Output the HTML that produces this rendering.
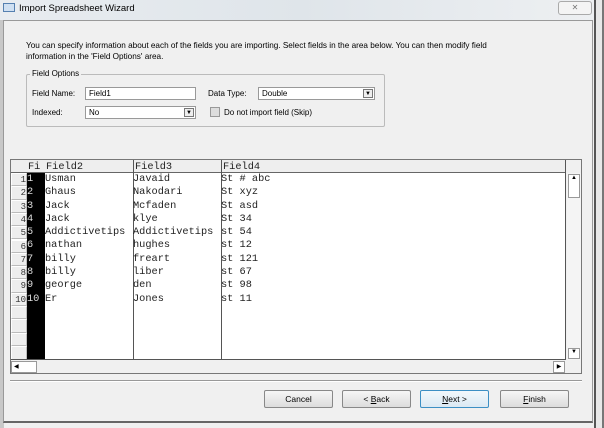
<!DOCTYPE html>
<html><head><style>
*{box-sizing:border-box;margin:0;padding:0}
body{width:604px;height:428px;background:#f0f0f0;font-family:"Liberation Sans",sans-serif;font-size:8px;color:#000;position:relative;overflow:hidden}
.a{position:absolute}
.mono{font-family:"Liberation Mono",monospace;font-size:10.3px;color:#222}
.inp{background:#fff;border:1px solid #999;font-size:8px;padding:1px 3px;height:13px}
.dd{position:absolute;right:1px;top:1px;width:10px;height:9px;border:1px solid #777;background:#eee;font-size:6px;text-align:center;line-height:8px}
.btn{position:absolute;top:390px;height:18px;width:69px;border:1px solid #888;border-radius:2px;background:linear-gradient(#f6f6f6,#dcdcdc);text-align:center;line-height:16px;font-size:8.5px}
.rn{position:absolute;left:11px;width:16px;height:13.3px;border:1px solid #bbb;border-top-color:#fff;border-left-color:#fff;background:#eee;font-family:"Liberation Mono",monospace;font-size:9px;text-align:right;line-height:12px;color:#333}
</style></head><body>
<div class="a" style="left:0;top:0;width:604px;height:20px;background:linear-gradient(90deg,#e8ecf0,#dfe5ea 50%,#eef0f2)"></div>
<div class="a" style="left:3px;top:3px;width:12px;height:9px;border:1px solid #5580b0;background:#cfe0f2"></div>
<div class="a" style="left:19px;top:3px;font-size:9.5px">Import Spreadsheet Wizard</div>
<div class="a" style="left:558px;top:1px;width:34px;height:14px;border:1px solid #aaa;border-radius:3px;background:#f4f4f4;text-align:center;font-size:8px;color:#777;line-height:12px">✕</div>
<div class="a" style="left:0;top:20px;width:4px;height:408px;background:#c8c8c8"></div>
<div class="a" style="left:594px;top:0;width:10px;height:428px;background:#e8e8e8;border-left:2px solid #555;border-right:2px solid #777"></div>
<div class="a" style="left:3px;top:20px;width:590px;height:403px;border:1px solid #999;border-bottom:2px solid #666"></div>
<div class="a" style="left:26px;top:40px;line-height:11px;width:500px;font-size:8.2px">You can specify information about each of the fields you are importing. Select fields in the area below. You can then modify field<br>information in the 'Field Options' area.</div>
<div class="a" style="left:26px;top:74px;width:359px;height:53px;border:1px solid #bbb;border-radius:2px"></div>
<div class="a" style="left:30px;top:69px;background:#f0f0f0;padding:0 2px">Field Options</div>
<div class="a" style="left:32px;top:89px">Field Name:</div>
<div class="a inp" style="left:85px;top:87px;width:111px">Field1</div>
<div class="a" style="left:208px;top:89px">Data Type:</div>
<div class="a inp" style="left:258px;top:87px;width:117px">Double<div class="dd">▼</div></div>
<div class="a" style="left:32px;top:108px">Indexed:</div>
<div class="a inp" style="left:85px;top:106px;width:111px">No<div class="dd">▼</div></div>
<div class="a" style="left:210px;top:107px;width:10px;height:10px;border:1px solid #999;background:#ddd"></div>
<div class="a" style="left:224px;top:108px">Do not import field (Skip)</div>
<!-- grid -->
<div class="a" style="left:10px;top:159px;width:572px;height:215px;border:1px solid #777;background:#f0f0f0"></div>
<div class="a" style="left:11px;top:160px;width:555px;height:200px;background:#fff"></div>
<div class="a" style="left:11px;top:160px;width:555px;height:13px;background:#eee;border-bottom:1px solid #666"></div>
<div class="rn" style="top:173px">1</div><div class="rn" style="top:186.3px">2</div><div class="rn" style="top:199.6px">3</div><div class="rn" style="top:212.9px">4</div><div class="rn" style="top:226.2px">5</div><div class="rn" style="top:239.5px">6</div><div class="rn" style="top:252.8px">7</div><div class="rn" style="top:266.1px">8</div><div class="rn" style="top:279.4px">9</div><div class="rn" style="top:292.7px">10</div><div class="rn" style="top:306px"></div><div class="rn" style="top:319.3px"></div><div class="rn" style="top:332.6px"></div><div class="rn" style="top:345.9px;height:14px"></div>
<div class="a" style="left:27px;top:173px;width:18px;height:187px;background:#000"></div>
<div class="a" style="left:133px;top:160px;width:1px;height:200px;background:#555"></div>
<div class="a" style="left:221px;top:160px;width:1px;height:200px;background:#555"></div>
<div class="a" style="left:565px;top:160px;width:1px;height:200px;background:#555"></div>
<div class="a" style="left:11px;top:359px;width:555px;height:1px;background:#555"></div>
<div class="a mono" style="left:28px;top:161px">Fi</div>
<div class="a mono" style="left:46px;top:161px">Field2</div>
<div class="a mono" style="left:135px;top:161px">Field3</div>
<div class="a mono" style="left:223px;top:161px">Field4</div>
<div class="a mono" style="left:27px;top:173px;line-height:13.3px;color:#ddd">1<br>2<br>3<br>4<br>5<br>6<br>7<br>8<br>9<br>10</div>
<div class="a mono" style="left:45px;top:173px;line-height:13.3px">Usman<br>Ghaus<br>Jack<br>Jack<br>Addictivetips<br>nathan<br>billy<br>billy<br>george<br>Er</div>
<div class="a mono" style="left:133px;top:173px;line-height:13.3px">Javaid<br>Nakodari<br>Mcfaden<br>klye<br>Addictivetips<br>hughes<br>freart<br>liber<br>den<br>Jones</div>
<div class="a mono" style="left:221px;top:173px;line-height:13.3px">St # abc<br>St xyz<br>St asd<br>St 34<br>st 54<br>st 12<br>st 121<br>st 67<br>st 98<br>st 11</div>
<div class="a" style="left:567px;top:173px;width:14px;height:187px;background:#f4f4f4"></div>
<div class="a" style="left:568px;top:174px;width:12px;height:24px;border:1px solid #999;background:#fff;font-size:6px;text-align:center">▲</div>
<div class="a" style="left:568px;top:348px;width:12px;height:11px;border:1px solid #999;background:#fff;font-size:6px;text-align:center">▼</div>
<div class="a" style="left:11px;top:361px;width:26px;height:12px;border:1px solid #999;background:#fff;font-size:6px;line-height:10px;padding-left:2px">◀</div>
<div class="a" style="left:553px;top:361px;width:12px;height:12px;border:1px solid #999;background:#fff;font-size:6px;line-height:10px;text-align:center">▶</div>
<div class="a" style="left:10px;top:380px;width:572px;height:2px;border-top:1px solid #999;border-bottom:1px solid #fff"></div>
<div class="btn" style="left:264px">Cancel</div>
<div class="btn" style="left:342px">&lt; <u>B</u>ack</div>
<div class="btn" style="left:420px;border-color:#3c8fc4;background:linear-gradient(#f2f8fc,#dbe9f3)"><u>N</u>ext &gt;</div>
<div class="btn" style="left:500px"><u>F</u>inish</div>
</body></html>
